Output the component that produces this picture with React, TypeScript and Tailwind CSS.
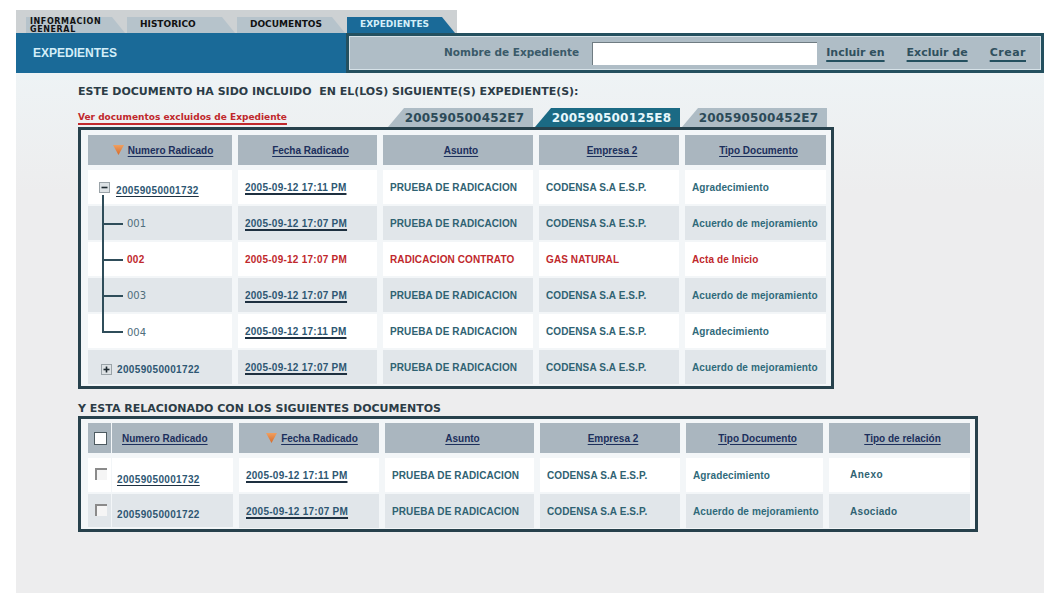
import React from "react";

const DV = "font-['DejaVu_Sans',sans-serif]";
const AR = "font-['Liberation_Sans',Arial,sans-serif]";

function Tri() {
  return (
    <svg width="11" height="10" viewBox="0 0 11 10" className="shrink-0">
      <defs>
        <linearGradient id="tg" x1="0" y1="0" x2="0" y2="1">
          <stop offset="0" stopColor="#f0a060" />
          <stop offset="1" stopColor="#d66a2a" />
        </linearGradient>
      </defs>
      <polygon points="0,0 11,0 5.5,10" fill="url(#tg)" />
    </svg>
  );
}

function TopTab({ label, active, w, two }: { label: string; active?: boolean; w: string; two?: boolean }) {
  return (
    <div
      className={`${w} h-[16px] flex overflow-hidden ${two ? "items-start" : "items-center"} ${
        active ? "bg-[#1a6a98] text-[#d4eef8]" : "bg-[#b6c3cb] text-[#111]"
      } [clip-path:polygon(0_0,calc(100%-13px)_0,100%_100%,0_100%)] ${DV} font-bold ${
        two ? "text-[8px] leading-[8px] pl-[4px] tracking-[0.6px]" : "text-[9px] pl-[13px]"
      }`}
    >
      {two ? (
        <div className="pt-[1px]">
          INFORMACION
          <br />
          GENERAL
        </div>
      ) : (
        label
      )}
    </div>
  );
}

function ExpTab({ label, active }: { label: string; active?: boolean }) {
  return (
    <div
      className={`w-[145px] h-[19px] flex items-center justify-center pl-[8px] ${DV} font-bold text-[12px] tracking-[0.2px] ${
        active ? "bg-[#1b6a84] text-[#e6f7fc]" : "bg-[#aebcc5] text-[#2c4a58]"
      } [clip-path:polygon(16px_0,100%_0,100%_100%,0_100%)]`}
    >
      {label}
    </div>
  );
}

function HeadCell({ label, tri, left }: { label: string; tri?: boolean; left?: boolean }) {
  return (
    <div
      className={`h-[30px] bg-[#aab6bf] flex items-center ${left ? "pl-[10px]" : "justify-center pl-[6px]"} gap-[4px] ${AR} font-bold text-[10px] text-[#1c2f5c]`}
    >
      {tri && <Tri />}
      <span className="underline decoration-[#1c2f5c] underline-offset-[2px]">{label}</span>
    </div>
  );
}

type Row = {
  kind: "parent" | "child" | "last" | "closed";
  num: string;
  date: string;
  asunto: string;
  emp: string;
  tipo: string;
  red?: boolean;
};

const rows1: Row[] = [
  { kind: "parent", num: "20059050001732", date: "2005-09-12 17:11 PM", asunto: "PRUEBA DE RADICACION", emp: "CODENSA S.A E.S.P.", tipo: "Agradecimiento" },
  { kind: "child", num: "001", date: "2005-09-12 17:07 PM", asunto: "PRUEBA DE RADICACION", emp: "CODENSA S.A E.S.P.", tipo: "Acuerdo de mejoramiento" },
  { kind: "child", num: "002", date: "2005-09-12 17:07 PM", asunto: "RADICACION CONTRATO", emp: "GAS NATURAL", tipo: "Acta de Inicio", red: true },
  { kind: "child", num: "003", date: "2005-09-12 17:07 PM", asunto: "PRUEBA DE RADICACION", emp: "CODENSA S.A E.S.P.", tipo: "Acuerdo de mejoramiento" },
  { kind: "last", num: "004", date: "2005-09-12 17:11 PM", asunto: "PRUEBA DE RADICACION", emp: "CODENSA S.A E.S.P.", tipo: "Agradecimiento" },
  { kind: "closed", num: "20059050001722", date: "2005-09-12 17:07 PM", asunto: "PRUEBA DE RADICACION", emp: "CODENSA S.A E.S.P.", tipo: "Acuerdo de mejoramiento" },
];

function ToggleBox({ plus }: { plus?: boolean }) {
  return (
    <div className="w-[11px] h-[11px] bg-[#dde2e5] border border-[#9aa3a8] flex items-center justify-center shrink-0">
      <svg width="7" height="7" viewBox="0 0 7 7">
        <rect x="0.5" y="2.7" width="6" height="1.6" fill="#1e2a30" />
        {plus && <rect x="2.7" y="0.5" width="1.6" height="6" fill="#1e2a30" />}
      </svg>
    </div>
  );
}

function DataCell({ children, bg, cls }: { children: React.ReactNode; bg: string; cls?: string }) {
  return (
    <div className={`h-[34px] ${bg} flex items-center pl-[7px] ${AR} font-bold text-[10px] tracking-[0.1px] ${cls ?? ""}`}>
      {children}
    </div>
  );
}

const LINE = "bg-[#2f4d5a]";

function FirstCell({ r, bg }: { r: Row; bg: string }) {
  const red = r.red;
  return (
    <div className={`h-[34px] ${bg} relative flex items-center`}>
      {r.kind === "parent" && (
        <>
          <div className="ml-[11px] mt-[1px]">
            <ToggleBox />
          </div>
          <span className={`ml-[6px] mt-[6px] ${AR} font-bold text-[10px] tracking-[0.35px] text-[#2e5773] underline decoration-[#1e3040] underline-offset-[2px]`}>
            {r.num}
          </span>
          <div className={`absolute left-[14px] top-[25px] -bottom-[2px] w-[2px] ${LINE}`} />
        </>
      )}
      {(r.kind === "child" || r.kind === "last") && (
        <>
          <div className={`absolute left-[14px] -top-[2px] w-[2px] ${LINE} ${r.kind === "last" ? "h-[21px]" : "-bottom-[2px]"}`} />
          <div className={`absolute left-[14px] top-[17px] w-[21px] h-[2px] ${LINE}`} />
          <span
            className={`ml-[39px] ${
              red ? `${AR} font-bold text-[10px] text-[#c0282c] tracking-[0.3px]` : `${DV} text-[10px] text-[#4f6e7c]`
            } ${r.kind === "last" ? "mt-[3px]" : ""}`}
          >
            {r.num}
          </span>
        </>
      )}
      {r.kind === "closed" && (
        <>
          <div className="ml-[13px] mt-[4px]">
            <ToggleBox plus />
          </div>
          <span className={`ml-[5px] mt-[5px] ${AR} font-bold text-[10px] tracking-[0.35px] text-[#2e5773]`}>{r.num}</span>
        </>
      )}
    </div>
  );
}

function DateText({ t, red }: { t: string; red?: boolean }) {
  if (red) return <span className="text-[#c0282c] text-[10px] tracking-[0.25px]">{t}</span>;
  return (
    <span className="text-[#2e5773] text-[10px] tracking-[0.25px] underline decoration-[#1e3040] decoration-[1.5px] underline-offset-[2px]">
      {t}
    </span>
  );
}

function RowCheck() {
  return <div className="w-[12px] h-[12px] bg-[#f5f5f5] border-t-2 border-l-2 border-[#8a8a8a] shrink-0" />;
}

export default function App() {
  return (
    <div className="w-[1064px] h-[600px] bg-white pl-[16px] pt-[10px] overflow-hidden">
      <div className="w-[1028px] h-[583px] bg-[#ededee] flex flex-col">
        {/* tab strip */}
        <div className="h-[23px] flex bg-white">
          <div className="w-[441px] h-[23px] bg-[#cdd1d3] flex items-end pl-[10px] gap-[2px]">
            <TopTab label="INFORMACION GENERAL" w="w-[99px]" two />
            <TopTab label="HISTORICO" w="w-[108px]" />
            <TopTab label="DOCUMENTOS" w="w-[108px]" />
            <TopTab label="EXPEDIENTES" w="w-[108px]" active />
          </div>
        </div>

        {/* header bar */}
        <div className="h-[40px] flex">
          <div className={`w-[330px] bg-[#1a6a98] flex items-center pl-[17px] text-[#d4eef8] ${AR} font-bold text-[12px]`}>
            EXPEDIENTES
          </div>
          <div className="flex-1 bg-[#afbdc6] border-[3px] border-[#24505f] shadow-[inset_0_0_0_1px_#d6e2e8] flex items-center justify-end pr-[15px]">
            <span className={`${DV} font-bold text-[10.5px] text-[#3a5a69]`}>Nombre de Expediente</span>
            <div className="ml-[13px] w-[225px] h-[23px] bg-white border-t border-l border-[#6f7c82]" />
            <div className={`ml-[9px] flex items-center gap-[22px] ${DV} font-bold text-[11px] text-[#30505e]`}>
              <span className="underline decoration-[#24505f] decoration-2 underline-offset-[4px]">Incluir en</span>
              <span className="underline decoration-[#24505f] decoration-2 underline-offset-[4px]">Excluir de</span>
              <span className="underline decoration-[#24505f] decoration-2 underline-offset-[4px] tracking-[0.5px]">Crear</span>
            </div>
          </div>
        </div>

        {/* body */}
        <div className="pl-[62px] pt-[12px] bg-[linear-gradient(#eef3f5,#ededee_120px)] flex-1">
          <div className={`${DV} font-bold text-[11px] leading-[14px] text-[#2c3c46] whitespace-pre`}>
            ESTE DOCUMENTO HA SIDO INCLUIDO  EN EL(LOS) SIGUIENTE(S) EXPEDIENTE(S):
          </div>

          <div className="mt-[9px] flex items-end h-[19px]">
            <div className="w-[310px] pb-[1px]">
              <span className={`${DV} font-bold text-[9px] text-[#c0282c] underline decoration-[#c0282c] decoration-2 underline-offset-[3px]`}>
                Ver documentos excluidos de Expediente
              </span>
            </div>
            <div className="flex gap-[2px]">
              <ExpTab label="200590500452E7" />
              <ExpTab label="200590500125E8" active />
              <ExpTab label="200590500452E7" />
            </div>
          </div>

          {/* table 1 */}
          <div className="w-[756px] border-[3px] border-[#27414c] bg-[#f3f6f8] pt-[5px] pl-[7px] pb-[2px]">
            <div className="grid grid-cols-[144px_139px_150px_140px_141px] gap-x-[6px] gap-y-[2px]">
              <HeadCell label="Numero Radicado" tri />
              <HeadCell label="Fecha Radicado" />
              <HeadCell label="Asunto" />
              <HeadCell label="Empresa 2" />
              <HeadCell label="Tipo Documento" />
              <div className="col-span-5 h-[1px]" />
              {rows1.map((r, i) => {
                const bg = i % 2 === 0 ? "bg-white" : "bg-[#e1e6ea]";
                const color = r.red ? "text-[#c0282c]" : "text-[#2f6272]";
                return (
                  <React.Fragment key={i}>
                    <FirstCell r={r} bg={bg} />
                    <DataCell bg={bg}>
                      <DateText t={r.date} red={r.red} />
                    </DataCell>
                    <DataCell bg={bg} cls={color}>
                      {r.asunto}
                    </DataCell>
                    <DataCell bg={bg} cls={color}>
                      {r.emp}
                    </DataCell>
                    <DataCell bg={bg} cls={r.red ? "text-[#c0282c]" : "text-[#2f6a7a]"}>
                      {r.tipo}
                    </DataCell>
                  </React.Fragment>
                );
              })}
            </div>
          </div>

          <div className={`mt-[13px] ${DV} font-bold text-[11px] leading-[14px] text-[#2c3c46]`}>
            Y ESTA RELACIONADO CON LOS SIGUIENTES DOCUMENTOS
          </div>

          {/* table 2 */}
          <div className="w-[900px] border-[3px] border-[#27414c] bg-[#f3f6f8] pt-[4px] pl-[7px] pb-[1px]">
            <div className="grid grid-cols-[145px_140px_149px_140px_137px_141px] gap-x-[6px] gap-y-[2px]">
              <div className="flex gap-[1px]">
                <div className="w-[23px] h-[30px] bg-[#aab6bf] flex items-center justify-center pl-[2px]">
                  <div className="w-[13px] h-[13px] bg-white border border-[#4d5a60]" />
                </div>
                <div className="flex-1">
                  <HeadCell label="Numero Radicado" left />
                </div>
              </div>
              <HeadCell label="Fecha Radicado" tri />
              <HeadCell label="Asunto" />
              <HeadCell label="Empresa 2" />
              <HeadCell label="Tipo Documento" />
              <HeadCell label="Tipo de relación" />
              <div className="col-span-6 h-[1px]" />
              {[
                { num: "20059050001732", date: "2005-09-12 17:11 PM", tipo: "Agradecimiento", rel: "Anexo", ul: true },
                { num: "20059050001722", date: "2005-09-12 17:07 PM", tipo: "Acuerdo de mejoramiento", rel: "Asociado", ul: false },
              ].map((r, i) => {
                const bg = i === 0 ? "bg-white" : "bg-[#e1e6ea]";
                const h = i === 0 ? "h-[34px]" : "h-[33px]";
                return (
                  <React.Fragment key={i}>
                    <div className={`${h} flex gap-[1px]`}>
                      <div className={`w-[23px] ${bg} flex justify-center pt-[10px] pl-[2px]`}>
                        <RowCheck />
                      </div>
                      <div className={`flex-1 ${bg} flex items-center pl-[5px]`}>
                        <span
                          className={`mt-[8px] ${AR} font-bold text-[10px] tracking-[0.35px] text-[#2e5773] ${
                            r.ul ? "underline decoration-[#1e3040] underline-offset-[2px]" : ""
                          }`}
                        >
                          {r.num}
                        </span>
                      </div>
                    </div>
                    <DataCell bg={bg} cls={h}>
                      <DateText t={r.date} />
                    </DataCell>
                    <DataCell bg={bg} cls={`${h} text-[#2f6272]`}>
                      PRUEBA DE RADICACION
                    </DataCell>
                    <DataCell bg={bg} cls={`${h} text-[#2f6272]`}>
                      CODENSA S.A E.S.P.
                    </DataCell>
                    <DataCell bg={bg} cls={`${h} text-[#2f6a7a]`}>
                      {r.tipo}
                    </DataCell>
                    <DataCell bg={bg} cls={`${h} text-[#2f6272] !pl-[21px]`}>
                      <span className={i === 0 ? "-mt-[2px] tracking-[0.5px]" : "tracking-[0.3px]"}>{r.rel}</span>
                    </DataCell>
                  </React.Fragment>
                );
              })}
            </div>
          </div>
        </div>
      </div>
    </div>
  );
}
